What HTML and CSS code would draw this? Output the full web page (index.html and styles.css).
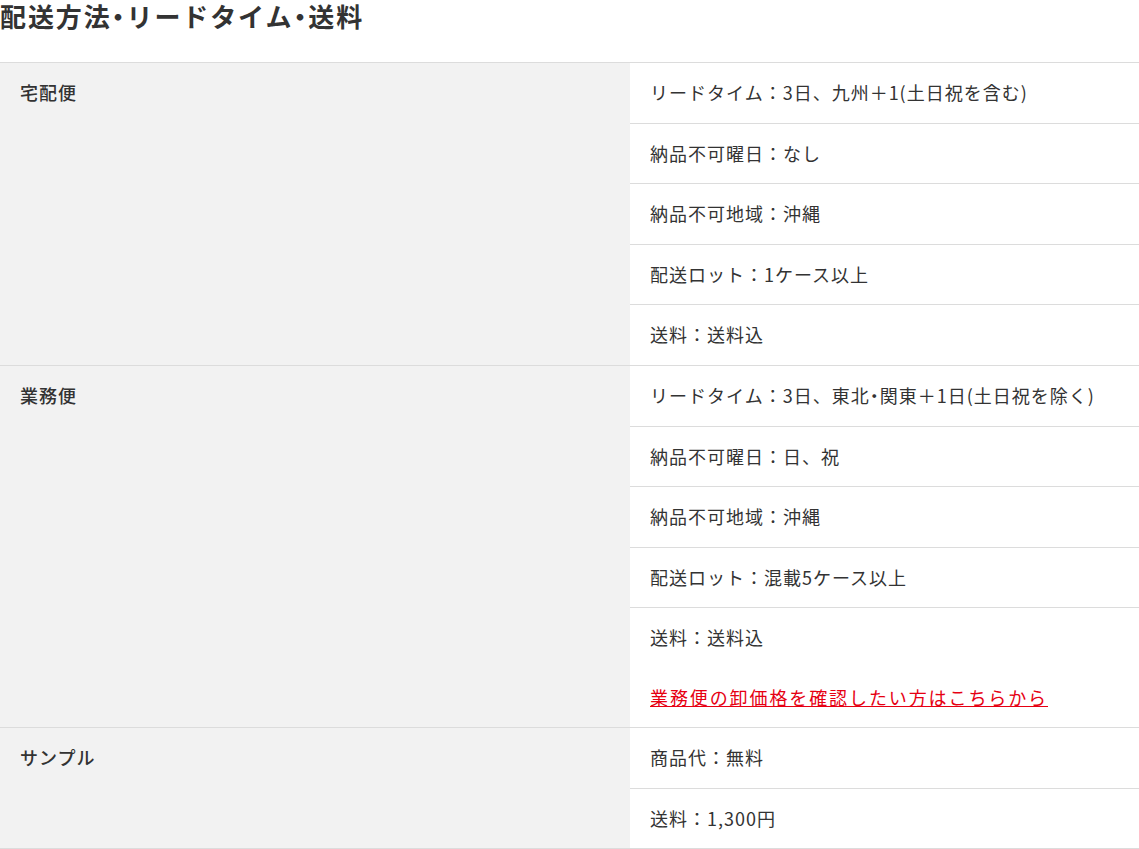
FILE: index.html
```html
<!DOCTYPE html>
<html lang="ja">
<head>
<meta charset="utf-8">
<title>配送方法・リードタイム・送料</title>
<link rel="stylesheet" href="styles.css">
</head>
<body>
<section class="shipping">
  <h2 class="title">配送方法<span class="dot">・</span>リードタイム<span class="dot">・</span>送料</h2>
  <div class="table">
    <div class="group">
      <div class="label">宅配便</div>
      <div class="cells">
        <div class="cell">リードタイム：3日、九州＋1(土日祝を含む)</div>
        <div class="cell">納品不可曜日：なし</div>
        <div class="cell">納品不可地域：沖縄</div>
        <div class="cell">配送ロット：1ケース以上</div>
        <div class="cell">送料：送料込</div>
      </div>
    </div>
    <div class="group">
      <div class="label">業務便</div>
      <div class="cells">
        <div class="cell">リードタイム：3日、東北<span class="dot">・</span>関東＋1日(土日祝を除く)</div>
        <div class="cell">納品不可曜日：日、祝</div>
        <div class="cell">納品不可地域：沖縄</div>
        <div class="cell">配送ロット：混載5ケース以上</div>
        <div class="cell">送料：送料込<br><br><a class="link" href="#">業務便の卸価格を確認したい方はこちらから</a></div>
      </div>
    </div>
    <div class="group">
      <div class="label">サンプル</div>
      <div class="cells">
        <div class="cell">商品代：無料</div>
        <div class="cell">送料：1,300円</div>
      </div>
    </div>
  </div>
</section>
</body>
</html>
```
FILE: styles.css
```css
html, body {
  margin: 0;
  padding: 0;
  background: #fff;
}
body {
  font-family: "Noto Sans CJK JP", "Noto Sans", sans-serif;
  color: #333;
}
.title {
  margin: 0 0 31px 0;
  font-size: 26px;
  line-height: 31px;
  font-weight: bold;
  letter-spacing: 1.9px;
  color: #333;
}
.table {
  border-top: 1px solid #dcdcdc;
}
.group {
  display: grid;
  grid-template-columns: 630px 1fr;
  border-bottom: 1px solid #dcdcdc;
}
.label {
  background: #f2f2f2;
  padding: 15px 20px;
  font-size: 18px;
  line-height: 29.6px;
  font-weight: 500;
  letter-spacing: 1px;
  color: #333;
}
.cells {
  display: flex;
  flex-direction: column;
}
.cell {
  padding: 15px 20px;
  font-size: 18px;
  line-height: 29.6px;
  letter-spacing: 1px;
  color: #333;
  border-bottom: 1px solid #dcdcdc;
}
.cell:last-child {
  border-bottom: none;
}
.dot {
  font-feature-settings: "palt";
}
.link {
  color: #e60012;
  text-decoration: underline;
  letter-spacing: 1.9px;
}
```
